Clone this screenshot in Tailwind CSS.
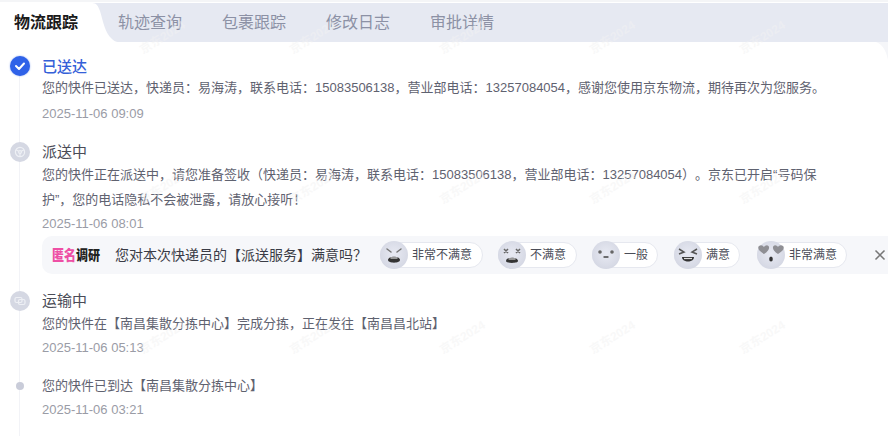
<!DOCTYPE html>
<html lang="zh"><head><meta charset="utf-8">
<script src="https://cdn.jsdelivr.net/npm/@tailwindcss/browser@4"></script>
</head>
<body class="bg-white overflow-hidden font-['Liberation_Sans','Noto_Sans_CJK_SC',sans-serif] [text-spacing-trim:space-all]">
<svg class="absolute w-0 h-0"><defs><radialGradient id="fg" cx="50%" cy="45%" r="60%"><stop offset="0" stop-color="#e8eaf3"/><stop offset="1" stop-color="#d3d6e2"/></radialGradient></defs></svg>
<div class="relative w-[888px] h-[436px] overflow-hidden border-t-2 border-[#f4f5f7] pt-px">
  <!-- tabs -->
  <div class="relative flex h-[39px] bg-[#e6e9f2] items-center text-[16px] text-[#8c91a5]">
    <svg class="absolute left-0 top-0" width="118" height="39" viewBox="0 0 118 39"><path d="M0 0H92C97 0 98 3 100 8C103 18 105 30 112 36C114 38 116 39 118 39H0Z" fill="#fff"/></svg>
    <span class="relative ml-[14px] font-bold text-[#1a1a1a]">物流跟踪</span>
    <span class="relative ml-[40px]">轨迹查询</span>
    <span class="relative ml-[40px]">包裹跟踪</span>
    <span class="relative ml-[40px]">修改日志</span>
    <span class="relative ml-[40px]">审批详情</span>
  </div>
  <svg class="absolute right-0 top-[40px]" width="12" height="18" viewBox="0 0 12 18"><path d="M0 0H12V18C10 8 6 2 0 0Z" fill="#f5f6f9"/></svg>
  <!-- timeline -->
  <div class="relative h-[394px] pt-[13px] text-[13px] text-[#5f6270]">
    <div class="absolute left-[19px] top-[20px] bottom-0 w-px bg-[#f2f3f7]"></div>

    <div class="relative pl-[42px] h-[86px]">
      <div class="absolute left-[10px] top-[1px] w-[20px] h-[20px] rounded-full bg-[#2f62e8] shadow-[0_0_2px_#8fabf2] flex items-center justify-center">
        <svg width="12" height="10" viewBox="0 0 12 10"><path d="M2 5l3 3 5-5.500" fill="none" stroke="#fff" stroke-width="2" stroke-linecap="round" stroke-linejoin="round"/></svg>
      </div>
      <div class="text-[15px] leading-[24px] font-medium text-[#3460d8]">已送达</div>
      <div class="-mt-[2px] leading-[22px]">您的快件已送达，快递员：易海涛，联系电话：15083506138，营业部电话：13257084054，感谢您使用京东物流，期待再次为您服务。</div>
      <div class="mt-[4px] leading-[22px] text-[#9a9ca6]">2025-11-06 09:09</div>
    </div>

    <div class="relative pl-[42px]">
      <div class="absolute left-[10px] top-[1px] w-[20px] h-[20px] rounded-full bg-[#d5d8e3] flex items-center justify-center">
        <svg width="12" height="12" viewBox="0 0 12 12" fill="none" stroke="#eef0f5" stroke-width="1.200"><circle cx="6" cy="6" r="4.600"/><circle cx="6" cy="6" r="1.400"/><path d="M6 7.500V10.500M4.700 5.200L2 3.800M7.300 5.200L10 3.800"/></svg>
      </div>
      <div class="text-[15px] leading-[22px] text-[#4a4c57]">派送中</div>
      <div class="-mt-px leading-[25px] w-[790px]">您的快件正在派送中，请您准备签收（快递员：易海涛，联系电话：15083506138，营业部电话：13257084054）。京东已开启“号码保护”，您的电话隐私不会被泄露，请放心接听！</div>
      <div class="mt-px leading-[22px] text-[#9a9ca6]">2025-11-06 08:01</div>
      <!-- survey -->
      <div class="mt-px h-[38px] rounded-l-[10px] bg-[#f6f7fa] flex items-center text-[#3a3c46] relative">
        <span class="ml-[10px] text-[12px] font-black inline-block scale-y-115 tracking-[0px]"><span class="text-[#ee4fa5]">匿名</span><span class="text-[#222]">调研</span></span>
        <span class="ml-[15px] text-[14px] w-[265px]">您对本次快递员的【派送服务】满意吗？</span>
        <div class="flex items-center text-[12px] text-[#4a4c57]">
          <div class="flex items-center h-[26px] w-[103px] rounded-full bg-white border border-[#e6e8ef]">
            <svg class="-ml-px shrink-0" width="28" height="28" viewBox="0 0 28 28"><circle cx="14" cy="14" r="14" fill="url(#fg)"/><path d="M7 8l4 3M21 8l-4 3" stroke="#777" stroke-width="1.500" stroke-linecap="round"/><path d="M8 19c0-4.500 12-4.500 12 0c0 3.500-12 3.500-12 0Z" fill="#333"/><path d="M10.500 17h7" stroke="#ddd" stroke-width="1.200"/></svg>
            <span class="ml-[4px]">非常不满意</span>
          </div>
          <div class="ml-[15px] flex items-center h-[26px] w-[79px] rounded-full bg-white border border-[#e6e8ef]">
            <svg class="-ml-px shrink-0" width="28" height="28" viewBox="0 0 28 28"><circle cx="14" cy="14" r="14" fill="url(#fg)"/><path d="M6 8l4 4M10 8l-4 4M18 8l4 4M22 8l-4 4" stroke="#666" stroke-width="1.500"/><path d="M8 20c0-4.500 12-4.500 12 0c0 2.500-12 2.500-12 0Z" fill="#333"/><path d="M10.500 18h7" stroke="#ddd" stroke-width="1.200"/></svg>
            <span class="ml-[4px]">不满意</span>
          </div>
          <div class="ml-[15px] flex items-center h-[26px] w-[66px] rounded-full bg-white border border-[#e6e8ef]">
            <svg class="-ml-px shrink-0" width="28" height="28" viewBox="0 0 28 28"><circle cx="14" cy="14" r="14" fill="url(#fg)"/><circle cx="8" cy="11" r="1.800" fill="#666"/><circle cx="20" cy="11" r="1.800" fill="#666"/><path d="M12 16h4" stroke="#444" stroke-width="1.300" stroke-linecap="round"/></svg>
            <span class="ml-[4px]">一般</span>
          </div>
          <div class="ml-[16px] flex items-center h-[26px] w-[66px] rounded-full bg-white border border-[#e6e8ef]">
            <svg class="-ml-px shrink-0" width="28" height="28" viewBox="0 0 28 28"><circle cx="14" cy="14" r="14" fill="url(#fg)"/><path d="M5 8l5 3-5 2M23 8l-5 3 5 2" fill="none" stroke="#555" stroke-width="1.500"/><path d="M8 16h12c0 6-12 6-12 0Z" fill="#333"/><path d="M10 17.500h8" stroke="#ddd" stroke-width="1.200"/></svg>
            <span class="ml-[4px]">满意</span>
          </div>
          <div class="ml-[17px] flex items-center h-[26px] w-[90px] rounded-full bg-white border border-[#e6e8ef]">
            <svg class="-ml-px shrink-0" width="28" height="28" viewBox="0 0 28 28"><circle cx="14" cy="14" r="14" fill="url(#fg)"/><path d="M7 13C2 10 0 7 2 5c2-1.500 4-.5 5 1 1-1.500 3-2.500 4.500-1 1.500 2 0 5-4.500 8ZM21 13c-4.500-3-6-6-4.500-8 1.500-1.500 3.500-.5 4.500 1 1-1.500 3-2.500 5-1 2 2 0 5-5 8Z" fill="#8f8f94"/><ellipse cx="14" cy="18" rx="1.800" ry="2.500" fill="#333"/></svg>
            <span class="ml-[4px]">非常满意</span>
          </div>
        </div>
        <svg class="absolute right-[2px] top-[13px]" width="12" height="12" viewBox="0 0 12 12"><path d="M1.500 1.500l9 9M10.500 1.500l-9 9" stroke="#777" stroke-width="1.500"/></svg>
      </div>
    </div>

    <div class="relative pl-[42px] mt-[16px] h-[85px]">
      <div class="absolute left-[10px] top-[1px] w-[20px] h-[20px] rounded-full bg-[#d5d8e3] flex items-center justify-center">
        <svg width="12" height="10" viewBox="0 0 12 10" fill="none" stroke="#eef0f5" stroke-width="1.200"><rect x="1" y="1.500" width="7" height="5" rx="1.500"/><rect x="4.500" y="3.500" width="6.500" height="5" rx="1.500"/></svg>
      </div>
      <div class="text-[15px] leading-[22px] text-[#4a4c57]">运输中</div>
      <div class="-mt-px leading-[25px]">您的快件在【南昌集散分拣中心】完成分拣，正在发往【南昌昌北站】</div>
      <div class="mt-px leading-[22px] text-[#9a9ca6]">2025-11-06 05:13</div>
    </div>

    <div class="relative pl-[42px]">
      <div class="absolute left-[16px] top-[7px] w-[8px] h-[8px] rounded-full bg-[#c9ccd9]"></div>
      <div class="leading-[22px]">您的快件已到达【南昌集散分拣中心】</div>
      <div class="mt-[2px] leading-[22px] text-[#9a9ca6]">2025-11-06 03:21</div>
    </div>
  </div>
  <!-- watermark overlay -->
  <div class="pointer-events-none absolute left-[137px] top-[28px] grid grid-cols-[repeat(5,150px)] grid-rows-[repeat(3,150px)] text-[12px] font-bold text-[#f2f2f2]/50">
    <span class="w-[52px] h-[14px] leading-[14px] -rotate-[32deg]">京东2024</span><span class="w-[52px] h-[14px] leading-[14px] -rotate-[32deg]">京东2024</span><span class="w-[52px] h-[14px] leading-[14px] -rotate-[32deg]">京东2024</span><span class="w-[52px] h-[14px] leading-[14px] -rotate-[32deg]">京东2024</span><span class="w-[52px] h-[14px] leading-[14px] -rotate-[32deg]">京东2024</span>
    <span class="w-[52px] h-[14px] leading-[14px] -rotate-[32deg]">京东2024</span><span class="w-[52px] h-[14px] leading-[14px] -rotate-[32deg]">京东2024</span><span class="w-[52px] h-[14px] leading-[14px] -rotate-[32deg]">京东2024</span><span class="w-[52px] h-[14px] leading-[14px] -rotate-[32deg]">京东2024</span><span class="w-[52px] h-[14px] leading-[14px] -rotate-[32deg]">京东2024</span>
    <span class="w-[52px] h-[14px] leading-[14px] -rotate-[32deg]">京东2024</span><span class="w-[52px] h-[14px] leading-[14px] -rotate-[32deg]">京东2024</span><span class="w-[52px] h-[14px] leading-[14px] -rotate-[32deg]">京东2024</span><span class="w-[52px] h-[14px] leading-[14px] -rotate-[32deg]">京东2024</span><span class="w-[52px] h-[14px] leading-[14px] -rotate-[32deg]">京东2024</span>
  </div>
</div>
</body></html>
